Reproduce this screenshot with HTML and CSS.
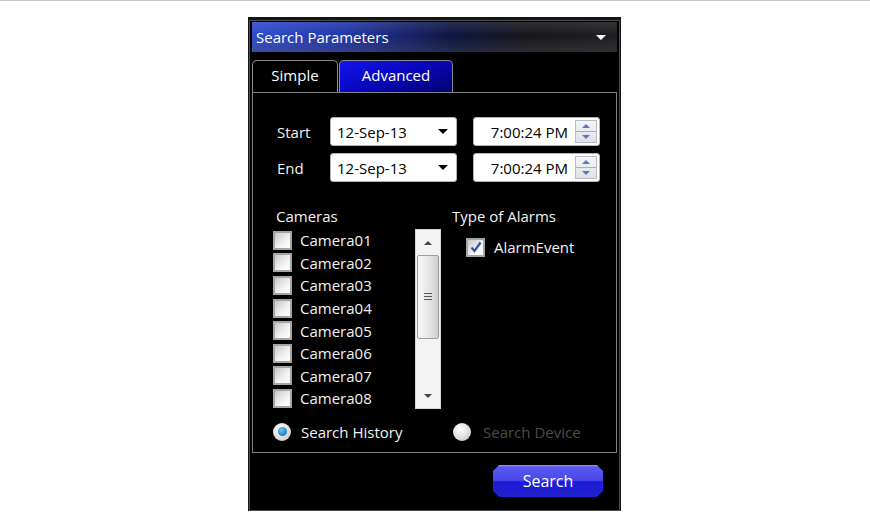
FILE: index.html
```html
<!DOCTYPE html>
<html lang="en">
<head>
    <meta charset="UTF-8">
    <meta name="viewport" content="width=device-width, initial-scale=1.0">
    <title>Search Parameters</title>
    <link rel="stylesheet" href="styles.css">
</head>
<body>
    <div class="page-rule"></div>

    <div class="panel">
        <div class="frame">
            <div class="panel-header">
                <span>Search Parameters</span>
                <span class="header-arrow"></span>
            </div>

            <div class="tabs">
                <div class="tab">Simple</div>
                <div class="tab active">Advanced</div>
            </div>

            <div class="tab-body">
                <div class="date-grid">
                    <span class="field-label">Start</span>
                    <div class="date-box"><span>12-Sep-13</span><span class="drop"></span></div>
                    <div class="time-box">
                        <span>7:00:24 PM</span>
                        <span class="spin"><span class="spin-up"></span><span class="spin-down"></span></span>
                    </div>

                    <span class="field-label">End</span>
                    <div class="date-box"><span>12-Sep-13</span><span class="drop"></span></div>
                    <div class="time-box">
                        <span>7:00:24 PM</span>
                        <span class="spin"><span class="spin-up"></span><span class="spin-down"></span></span>
                    </div>
                </div>

                <div class="lists">
                    <div class="cameras">
                        <div class="group-title">Cameras</div>
                        <div class="camera-list">
                            <div class="items">
                                <div class="check-row"><span class="box"></span>Camera01</div>
                                <div class="check-row"><span class="box"></span>Camera02</div>
                                <div class="check-row"><span class="box"></span>Camera03</div>
                                <div class="check-row"><span class="box"></span>Camera04</div>
                                <div class="check-row"><span class="box"></span>Camera05</div>
                                <div class="check-row"><span class="box"></span>Camera06</div>
                                <div class="check-row"><span class="box"></span>Camera07</div>
                                <div class="check-row"><span class="box"></span>Camera08</div>
                            </div>
                            <div class="scrollbar">
                                <span class="arrow-up"></span>
                                <div class="thumb"><span class="grip"></span></div>
                                <span class="arrow-down"></span>
                            </div>
                        </div>
                    </div>

                    <div class="alarms">
                        <div class="group-title">Type of Alarms</div>
                        <div class="check-row alarm-row">
                            <span class="box">
                                <svg width="12" height="12" viewBox="0 0 12 12"><path d="M1.5 6.5 L4.5 10 L10.5 1.5" fill="none" stroke="#3a4fa8" stroke-width="2.2"/></svg>
                            </span>AlarmEvent
                        </div>
                    </div>
                </div>

                <div class="radios">
                    <div class="radio-item"><span class="radio on"></span>Search History</div>
                    <div class="radio-item disabled"><span class="radio"></span>Search Device</div>
                </div>
            </div>

            <div class="actions">
                <button type="button" class="search-btn">Search</button>
            </div>
        </div>
    </div>
</body>
</html>
```

FILE: styles.css
```css
* {
    margin: 0;
    padding: 0;
    box-sizing: border-box;
    font-family: "Open Sans", "Liberation Sans", sans-serif;
}

body {
    background: white;
    color: #f2f2f2;
    font-size: 15px;
    height: 514px;
    overflow: hidden;
}

.page-rule {
    height: 1px;
    background: #c8c8c8;
}

.panel {
    width: 373px;
    margin: 16px 0 0 248px;
    padding: 3px 1px 0;
    background: #151515;
}

.frame {
    border: 1px solid #4c4c4c;
    padding: 1px 2px 0;
    background: black;
}

.panel-header {
    height: 30px;
    display: flex;
    align-items: center;
    justify-content: space-between;
    padding: 0 11px 0 4px;
    background:
        linear-gradient(to bottom, rgba(255,255,255,0.1), rgba(0,0,0,0) 45%, rgba(80,80,90,0.35)),
        linear-gradient(to right, #2f4bd0 0%, #2136a8 25%, #0e1540 55%, #17171b 75%, #1e1e22 100%);
    color: white;
    font-size: 15px;
}

.header-arrow {
    width: 0;
    height: 0;
    border-left: 5px solid transparent;
    border-right: 5px solid transparent;
    border-top: 5px solid white;
}

.tabs {
    display: flex;
    margin-top: 8px;
    height: 32px;
}

.tab {
    display: flex;
    align-items: center;
    justify-content: center;
    width: 86px;
    padding-bottom: 3px;
    border: 1px solid #8a8a8a;
    border-bottom: none;
    border-radius: 5px 5px 0 0;
    background: black;
    color: white;
    font-size: 15px;
}

.tab.active {
    width: 114px;
    margin-left: 1px;
    background: linear-gradient(160deg, #1414f0 0%, #0808c0 45%, #020270 100%);
}

.tab-body {
    height: 361px;
    border: 1px solid #808080;
    padding: 24px 0 0 20px;
}

.date-grid {
    display: grid;
    grid-template-columns: 53px 143px 127px;
    grid-auto-rows: 29px;
    row-gap: 7px;
    margin-left: 4px;
}

.field-label {
    display: flex;
    align-items: center;
    font-size: 15px;
}

.date-box,
.time-box {
    display: flex;
    align-items: center;
    background: white;
    border: 1px solid #b4b4b4;
    border-radius: 3px;
    color: black;
    font-size: 15px;
}

.date-box {
    width: 127px;
    justify-content: space-between;
    padding: 0 8px 0 6px;
}

.drop {
    width: 0;
    height: 0;
    border-left: 5px solid transparent;
    border-right: 5px solid transparent;
    border-top: 5px solid black;
}

.time-box {
    justify-content: flex-end;
    gap: 7px;
    padding-right: 2px;
}

.spin {
    display: flex;
    flex-direction: column;
    width: 22px;
    height: 23px;
    border: 1px solid #b9bcc4;
    background: linear-gradient(to bottom, #f4f5f8, #dfe1e6);
}

.spin-up,
.spin-down {
    flex: 1;
    display: flex;
    align-items: center;
    justify-content: center;
}

.spin-up {
    border-bottom: 1px solid #a9adb6;
}

.spin-up::after,
.spin-down::after {
    content: "";
    border-left: 4px solid transparent;
    border-right: 4px solid transparent;
}

.spin-up::after {
    border-bottom: 4px solid #5d78c4;
}

.spin-down::after {
    border-top: 4px solid #5d78c4;
}

.lists {
    display: flex;
    gap: 11px;
    margin-top: 24px;
}

.group-title {
    height: 20px;
    line-height: 20px;
    font-size: 15px;
}

.cameras .group-title {
    padding-left: 3px;
}

.camera-list {
    display: flex;
    margin-top: 3px;
    width: 168px;
}

.items {
    flex: 1;
    padding-top: 0;
}

.check-row {
    display: flex;
    align-items: center;
    gap: 8px;
    height: 22.6px;
    font-size: 15px;
}

.box {
    display: flex;
    align-items: center;
    justify-content: center;
    width: 19px;
    height: 19px;
    border: 2px solid #a4a4a4;
    background: linear-gradient(135deg, #c8c8c8, #f2f2f2 60%, #ffffff);
}

.scrollbar {
    width: 26px;
    height: 180px;
    display: flex;
    flex-direction: column;
    align-items: center;
    background: #f3f3f3;
    border: 1px solid #d6d6d6;
}

.arrow-up,
.arrow-down {
    height: 25px;
    display: flex;
    align-items: center;
}

.arrow-up::after,
.arrow-down::after {
    content: "";
    border-left: 4px solid transparent;
    border-right: 4px solid transparent;
}

.arrow-up::after {
    border-bottom: 4px solid #444;
}

.arrow-down {
    margin-top: auto;
}

.arrow-down::after {
    border-top: 4px solid #444;
}

.thumb {
    width: 22px;
    height: 84px;
    display: flex;
    align-items: center;
    justify-content: center;
    border: 1px solid #9c9c9c;
    border-radius: 2px;
    background: linear-gradient(to right, #f7f7f7, #e4e4e4 60%, #cfcfcf);
}

.grip {
    width: 8px;
    height: 9px;
    background: repeating-linear-gradient(to bottom, #555 0 1px, transparent 1px 3px);
}

.alarm-row {
    margin: 10px 0 0 14px;
    gap: 9px;
}

.radios {
    display: flex;
    margin-top: 12px;
}

.radio-item {
    display: flex;
    align-items: center;
    gap: 10px;
    font-size: 15px;
}

.radio-item:first-child {
    width: 180px;
    flex-shrink: 0;
}

.radio-item.disabled {
    color: #4c4c4c;
    gap: 12px;
}

.radio {
    width: 18px;
    height: 18px;
    flex-shrink: 0;
    border-radius: 50%;
    background: radial-gradient(circle at 40% 35%, #ffffff, #d4d4d4 70%, #a8a8a8);
    display: flex;
    align-items: center;
    justify-content: center;
}

.radio.on::after {
    content: "";
    width: 9px;
    height: 9px;
    border-radius: 50%;
    background: radial-gradient(circle at 40% 35%, #6cc4f4, #1b7fc8 70%, #125a9a);
}

.actions {
    display: flex;
    justify-content: flex-end;
    padding: 12px 14px 13px;
}

.search-btn {
    width: 110px;
    height: 32px;
    border: none;
    color: white;
    font-size: 16px;
    cursor: pointer;
    clip-path: polygon(6px 0, calc(100% - 6px) 0, 100% 6px, 100% calc(100% - 6px), calc(100% - 6px) 100%, 6px 100%, 0 calc(100% - 6px), 0 6px);
    background: linear-gradient(to bottom, #9a9aff 0, #5a5af2 2px, #4848ea 48%, #1c1cd8 52%, #2222cc 100%);
}
```
